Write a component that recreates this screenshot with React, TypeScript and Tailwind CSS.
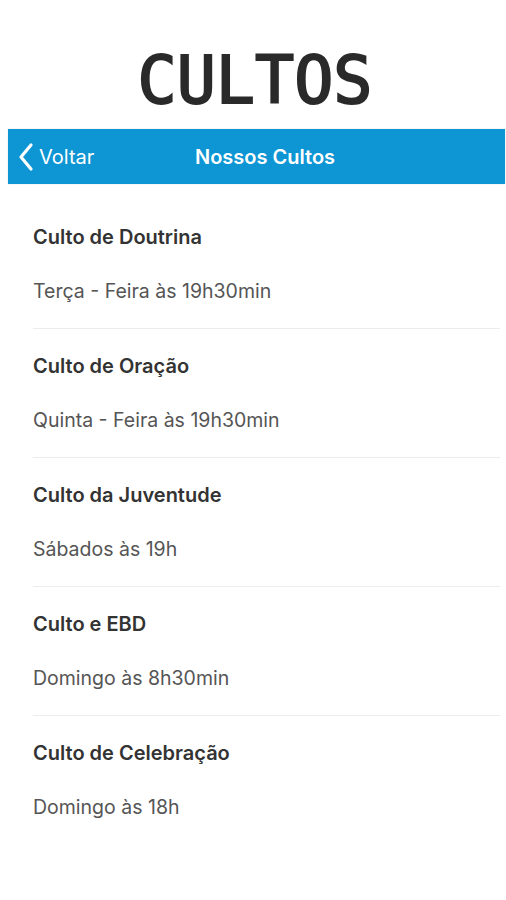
import React from "react";

const items = [
  { t: "Culto de Doutrina", s: "Terça - Feira às 19h30min" },
  { t: "Culto de Oração", s: "Quinta - Feira às 19h30min" },
  { t: "Culto da Juventude", s: "Sábados às 19h" },
  { t: "Culto e EBD", s: "Domingo às 8h30min" },
  { t: "Culto de Celebração", s: "Domingo às 18h" },
];

export default function App() {
  return (
    <div className="w-[506px] h-[900px] bg-white font-['Inter',sans-serif]">
      <div className="h-[129px] flex items-center justify-center pt-[32px] pl-[4px]">
        <span className="font-['DejaVu_Sans_Mono',monospace] text-[65px] leading-none text-[#2a2a2a] [-webkit-text-stroke:2px_#2a2a2a]">
          CULTOS
        </span>
      </div>
      <div className="ml-[8px] mr-[1px] h-[55px] bg-[#0e95d3] flex items-center relative shadow-[0_0_1px_rgba(0,0,0,0.2)]">
        <div className="flex items-center pl-[9px] text-white">
          <svg width="18" height="30" viewBox="0 0 18 30" className="mr-[4px]">
            <path d="M14 3 L4 15 L14 27" fill="none" stroke="white" strokeWidth="3.2" strokeLinecap="round" strokeLinejoin="round" />
          </svg>
          <span className="text-[20px]">Voltar</span>
        </div>
        <span className="absolute left-[187px] text-white font-semibold text-[20px]">Nossos Cultos</span>
      </div>
      <div className="pl-[33px] pr-[6px] pt-[16px]">
        {items.map((it, i) => (
          <div key={i} className={"pt-[2px] " + (i < items.length - 1 ? "border-b border-[#ececec]" : "")}>
            <div className="h-[70px] flex items-center text-[20px] font-semibold text-[#333]">{it.t}</div>
            <div className="h-[40px] flex items-center text-[19.5px] text-[#555]">{it.s}</div>
            <div className="h-[16px]" />
          </div>
        ))}
      </div>
    </div>
  );
}
